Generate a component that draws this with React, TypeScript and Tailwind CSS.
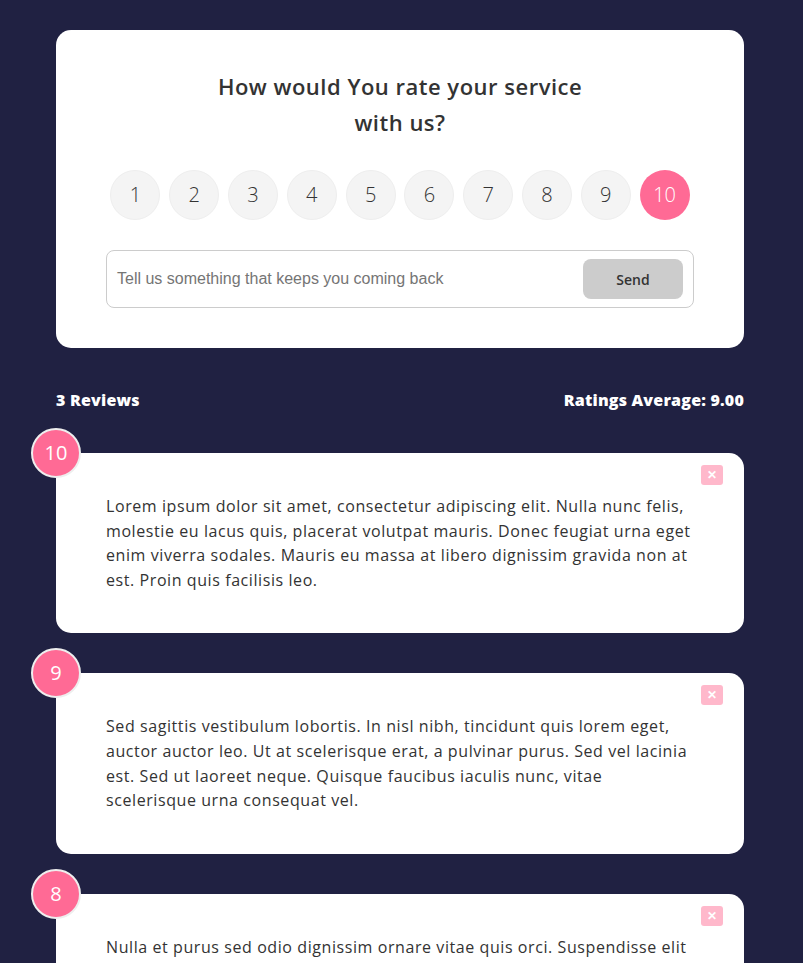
import React from "react";

const reviews = [
  {
    rating: 10,
    text: "Lorem ipsum dolor sit amet, consectetur adipiscing elit. Nulla nunc felis, molestie eu lacus quis, placerat volutpat mauris. Donec feugiat urna eget enim viverra sodales. Mauris eu massa at libero dignissim gravida non at est. Proin quis facilisis leo.",
  },
  {
    rating: 9,
    text: "Sed sagittis vestibulum lobortis. In nisl nibh, tincidunt quis lorem eget, auctor auctor leo. Ut at scelerisque erat, a pulvinar purus. Sed vel lacinia est. Sed ut laoreet neque. Quisque faucibus iaculis nunc, vitae scelerisque urna consequat vel.",
  },
  {
    rating: 8,
    text: "Nulla et purus sed odio dignissim ornare vitae quis orci. Suspendisse elit nulla, fermentum et dapibus at, tincidunt vel tellus. Morbi ut ultricies lorem, vitae porta lectus. Nam vel erat in sapien pretium tincidunt a vitae nisi.",
  },
];

export default function App() {
  const font = { fontFamily: "'Open Sans', Lato, sans-serif" };
  return (
    <div className="min-h-screen bg-[#202142] pt-[30px] pb-10" style={font}>
      <div className="ml-[56px] w-[688px]">
        <div className="bg-white rounded-[15px] px-[50px] pt-[38px] pb-10">
          <h2 className="mx-auto w-[400px] text-center text-[22px] leading-[36px] font-semibold tracking-[0.5px] text-[#333]">
            How would You rate your service with us?
          </h2>
          <div className="mt-[30px] flex justify-center gap-[8.8px]">
            {[1, 2, 3, 4, 5, 6, 7, 8, 9, 10].map((n) => (
              <div
                key={n}
                className={
                  n === 10
                    ? "w-[50px] h-[50px] rounded-full bg-[#ff6a95] text-white flex items-center justify-center text-[20px] font-light"
                    : "w-[50px] h-[50px] rounded-full bg-[#f4f4f4] border border-[#eee] text-[#333] flex items-center justify-center text-[20px] font-light"
                }
              >
                {n}
              </div>
            ))}
          </div>
          <div className="mt-[30px] h-[58px] border border-[#ccc] rounded-[8px] flex items-center pl-[10px] pr-[10px]">
            <span
              className="flex-1 text-[16px] text-[#757575]"
              style={{ fontFamily: "'Liberation Sans', Arial, sans-serif" }}
            >
              Tell us something that keeps you coming back
            </span>
            <button className="w-[100px] h-[40px] rounded-[8px] bg-[#cccccc] text-[#333] text-[14px] font-semibold">
              Send
            </button>
          </div>
        </div>

        <div className="mt-10 flex justify-between text-white text-[16px] leading-[24px] font-extrabold tracking-[0.2px]">
          <span>3 Reviews</span>
          <span>Ratings Average: 9.00</span>
        </div>

        <div className="mt-[41px] flex flex-col gap-10">
          {reviews.map((r) => (
            <div key={r.rating} className="relative bg-white rounded-[15px] px-[50px] pt-[41px] pb-[41px]">
              <div className="absolute -left-[25px] -top-[25px] w-[50px] h-[50px] rounded-full bg-[#ff6a95] border-2 border-[#eee] text-white text-[20px] flex items-center justify-center">
                {r.rating}
              </div>
              <button className="absolute right-[21px] top-[12px] w-[22px] h-[20px] rounded-[3px] bg-[#ffb8cb] text-white text-[12px] font-bold flex items-center justify-center leading-none">
                ✕
              </button>
              <p className="text-[16px] leading-[24.6px] tracking-[0.58px] text-[#333]">{r.text}</p>
            </div>
          ))}
        </div>
      </div>
    </div>
  );
}
